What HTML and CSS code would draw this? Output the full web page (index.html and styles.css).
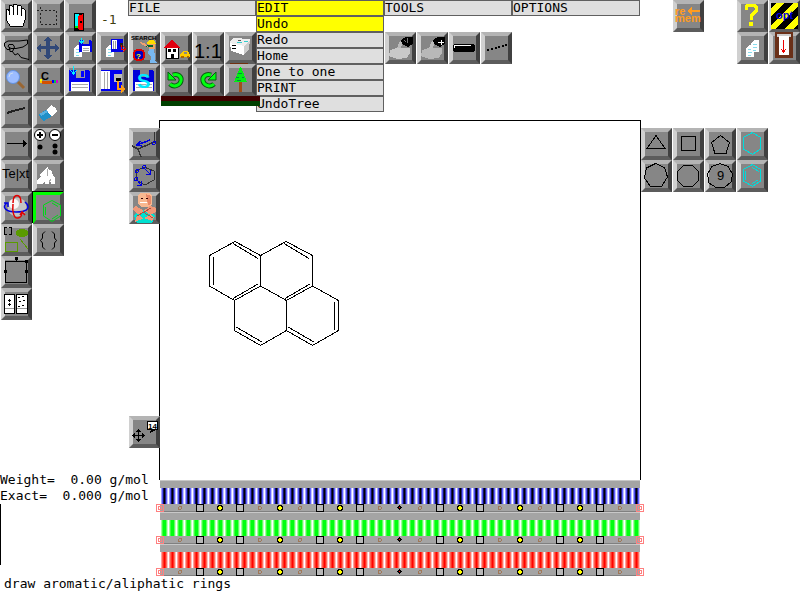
FILE: index.html
```
<!DOCTYPE html>
<html lang="en">
<head>
<meta charset="utf-8">
<title>Chemical drawing editor</title>
<link rel="stylesheet" href="styles.css">
</head>
<body>
<svg class="defs" aria-hidden="true">
  <defs>
    <g id="end" fill="none" stroke="#ff8080"><rect x="-3.5" y="4.5" width="7" height="7"/><rect x="-1.5" y="6.5" width="3" height="3"/></g>
    <g id="ring" fill="none" stroke="#a07858"><circle cx="0" cy="8" r="1.5"/></g>
    <g id="box" fill="#b8b8b8" stroke="#000"><rect x="-3.5" y="4.5" width="7" height="7"/></g>
    <g id="dot" fill="#ff0" stroke="#000"><path d="M-1 5.500H1L2.500 7V9L1 10.500H-1L-2.500 9V7Z"/></g>
    <g id="mid"><path d="M-1 5H0V6H1V7H2V8H1V9H0V10H-1V9H-2V8H-3V7H-2V6H-1Z" fill="#000"/><rect x="-1" y="7" width="1" height="1" fill="#f00"/></g>
    <g id="marks">
      <use href="#end" x="0%"/><use href="#ring" x="4.167%"/><use href="#box" x="8.333%"/><use href="#dot" x="12.5%"/><use href="#box" x="16.667%"/><use href="#ring" x="20.833%"/><use href="#dot" x="25%"/><use href="#ring" x="29.167%"/><use href="#box" x="33.333%"/><use href="#dot" x="37.5%"/><use href="#box" x="41.667%"/><use href="#ring" x="45.833%"/><use href="#mid" x="50%"/><use href="#ring" x="54.167%"/><use href="#box" x="58.333%"/><use href="#dot" x="62.5%"/><use href="#box" x="66.667%"/><use href="#ring" x="70.833%"/><use href="#dot" x="75%"/><use href="#ring" x="79.167%"/><use href="#box" x="83.333%"/><use href="#dot" x="87.5%"/><use href="#box" x="91.667%"/><use href="#ring" x="95.833%"/><use href="#end" x="100%"/>
    </g>
    <g id="sheet"><path d="M3 0H8V12H0V3Z" fill="#fff"/><path d="M2 4.500H6M2 7.500H6M2 10.500H5" stroke="#8de" fill="none"/></g>
  </defs>
</svg>
<main class="app">
  <section class="palette" aria-label="Tools">
    <div class="tools two">
      <button class="tool" aria-label="Hand"><svg viewBox="1 0 31 32"><path d="M10 26 7 21 6 12V10L8 9 9 11V6L11 5 13 7V5L15 4 17 5V7L19 5 21 6V9L23 8 25 10V20L23 26Z" fill="#fff" stroke="#000"/><path d="M9.500 9V15M13.500 7V15M17.500 7V15M21.500 9V16" stroke="#000"/></svg></button>
      <button class="tool" aria-label="Select"><svg viewBox="1 0 31 32"><path d="M8.500 10.500H24.500V24.500H8.500ZM5 10.500H8M8.500 7V10" fill="none" stroke="#222" stroke-dasharray="2 2"/></svg></button>
      <button class="tool" aria-label="Lasso"><svg class="smooth" viewBox="1 0 31 32" fill="none" stroke="#000"><path d="M10 17.500H7L4.500 14V11L8 9H19L27.500 8V12L23 15 16 16.500H11L8 14.500 9 12.500H13L14.500 15 12.500 19.500H10L9.500 16ZM12 19 15 23 18 21.500 21 25.500 29 27.500"/></svg></button>
      <button class="tool" aria-label="Move"><svg viewBox="1 0 31 32"><path d="M16 4 20 9H18V14H23V12L28 16 23 20V17H18V23H20L16 28 12 23H14V17H9V20L4 16 9 12V14H14V9H12Z" fill="#304878"/></svg></button>
      <button class="tool" aria-label="Magnify"><svg class="smooth" viewBox="1 0 31 32"><path d="M18 18 24 24" stroke="#996633" stroke-width="3"/><circle cx="13" cy="13" r="6.500" fill="#9cbcff" stroke="#6090e0"/><path d="M9 13Q9 9 13 9" stroke="#cde" fill="none"/></svg></button>
      <button class="tool" aria-label="Colour"><svg viewBox="1 0 31 32"><text class="icon-letter" x="9" y="16">C</text><path d="M8 15H10V17H8Z" fill="#ff0"/><path d="M8 17H19V19H8Z" fill="#fc0"/><path d="M10 17H20V20H10Z" fill="#d45000"/><path d="M20 16H22V19H20Z" fill="#00f"/><path d="M22 16H24V19H22Z" fill="#0c4"/><path d="M24 16H26V19H24Z" fill="#d0c"/></svg></button>
      <button class="tool" aria-label="Line"><svg viewBox="1 0 31 32"><path d="M7 17 13 15 25 12" stroke="#202020" stroke-width="2" fill="none"/></svg></button>
      <button class="tool" aria-label="Erase"><svg viewBox="1 0 31 32"><path d="M7 18 16 13 20 20 12 25 8 22Z" fill="#2090c8"/><path d="M7 18 15 14 16 16 9 20Z" fill="#58b0e0"/><path d="M15 13 19 9 24 12 25 15 20 20 16 17Z" fill="#fff"/></svg></button>
      <button class="tool" aria-label="Arrow"><svg viewBox="1 0 31 32"><path d="M7 15.500H26" stroke="#000"/><path d="M23 12 27 15.500 23 19Z"/></svg></button>
      <button class="tool" aria-label="Charge"><svg class="smooth" viewBox="1 0 31 32"><circle cx="8" cy="7" r="5.500" fill="#fff" stroke="#000"/><circle cx="23" cy="7" r="5.500" fill="#fff" stroke="#000"/><path d="M5 7H11M8 4V10M20 7H26" stroke="#000" stroke-width="2"/><circle cx="8" cy="19" r="2.500"/><circle cx="23" cy="18" r="2.500"/><circle cx="23" cy="24" r="2.500"/></svg></button>
      <button class="tool" aria-label="Text"><svg viewBox="1 0 31 32"><text class="icon-text" x="2" y="18">Te|xt</text></svg></button>
      <button class="tool" aria-label="Brush"><svg viewBox="1 0 31 32"><path d="M5 24V20L9 17 8 14 10 12 14 8 16 7 17 10 20 11 21 16 23 18V24H19V22H17V24H13V22L10 24Z" fill="#fff"/><path d="M15.500 9V16M17 22 19 19" stroke="#aaa"/></svg></button>
      <button class="tool" aria-label="Rotate in space"><svg class="smooth" viewBox="1 0 31 32"><circle cx="17" cy="15" r="9.500" fill="#c4c4c4"/><circle cx="14" cy="12" r="5" fill="#f8f8f8"/><path d="M7 11C1 15 6 20 16 20S30 17 27 12L25 10M4 11H8V15" fill="none" stroke="#0000e0" stroke-width="1.500"/><path d="M13 11C13 1 21 1 21 11M13 12C12 20 14 27 18 26S21 24 22 21M20 23 22 20 25 23" fill="none" stroke="#e00000" stroke-width="1.500"/></svg></button>
      <button class="tool selected" aria-label="Rings" aria-pressed="true"><svg class="smooth" viewBox="1 0 31 32"><path d="M20 8.500 28.500 13V24L20 29.500 11.500 24V13ZM20 11 26 14.500M26 23 20 27M13.500 15V23" fill="none" stroke="#00d818"/></svg></button>
      <button class="tool" aria-label="Shapes"><svg viewBox="1 0 31 32" fill="none"><path d="M7 3.500H4.500V10.500H7M9 3.500H11.500V10.500H9" stroke="#000"/><ellipse cx="22" cy="9" rx="6" ry="4" fill="#5a9b00"/><path d="M5.500 18.500H17.500V27.500H5.500ZM20 15 28 25" stroke="#5a9b00"/></svg></button>
      <button class="tool" aria-label="Braces"><svg class="smooth" viewBox="1 0 31 32"><path d="M13 7.500 10.500 10V14L8.500 16.500 10.500 19V23L13 25.500M20 7.500 22.500 10V14L24.500 16.500 22.500 19V23L20 25.500" fill="none" stroke="#000"/></svg></button>
      <button class="tool first" aria-label="Resize"><svg viewBox="1 0 31 32"><path d="M5.500 5.500H26.500V26.500H5.500ZM16.500 2V5" fill="none" stroke="#000"/><path d="M15 1H18V4H15ZM4 14H7V17H4ZM25 14H28V17H25ZM25 4H28V7H25Z"/></svg></button>
      <button class="tool first" aria-label="Templates"><svg viewBox="1 0 31 32"><path d="M4.500 6.500H14.500V25.500H4.500ZM16.500 6.500H27.500V25.500H16.500Z" fill="#fff" stroke="#000"/><path d="M8 12.500H11M9.500 11V14M8 16.500H11M9.500 15V18M18 9.500H20M22 8.500H24M19 13.500H21M23 12.500H25M18 18.500H20M22 17.500H24" stroke="#000"/><path d="M5 20.500H14M17 20.500H27" stroke="#999"/></svg></button>
    </div>
    <div class="tools two">
      <button class="tool" aria-label="Exit"><svg viewBox="1 0 31 32"><path d="M10 13H20V31H10Z"/><path d="M11 14H15V27H11Z" fill="#00f8ff"/><path d="M11 26H15V28H11Z" fill="#0e0"/><path d="M14 16 19 14V30H15L14 28Z" fill="#f00"/><path d="M16 21H18V23H16Z"/></svg></button>
      <output class="level">-1</output>
      <button class="tool" aria-label="Save page"><svg viewBox="1 0 31 32"><use href="#sheet" x="10" y="13"/><path d="M15 8H27L28 10V20H15Z" fill="#0000e8"/><path d="M19 8H25V12H19Z" fill="#888"/><path d="M18 14H26V20H18Z" fill="#fff"/><path d="M19 16.500H25M19 18.500H25" stroke="#aaa"/><path d="M17.500 6V11M15 8.500 17.500 11 20 8.500" stroke="#0ef" fill="none"/></svg></button>
      <button class="tool" aria-label="Load page"><svg viewBox="1 0 31 32"><use href="#sheet" x="10" y="13"/><path d="M15 7H27V20H15Z" fill="#0000e8"/><path d="M16 8H21V17H16Z" fill="#fff"/><path d="M17.500 9V17M19.500 9V17" stroke="#999"/><path d="M24 11H27V15H24Z" fill="#222"/><path d="M25.500 13V17H29M27 14 30 17 27 20" stroke="#e00" fill="none"/></svg></button>
      <button class="tool" aria-label="Save"><svg viewBox="1 0 31 32"><path d="M5 6H24L26 8V27H5Z" fill="#0000f0"/><path d="M12 6H21V14H12Z" fill="#999"/><path d="M17 7H20V13H17Z" fill="#00f"/><path d="M7 18H25V27H7Z" fill="#fff"/><path d="M8 20.500H24M8 23.500H24" stroke="#aaa"/><path d="M9.500 2V9M6 6 9.500 10 13 6" stroke="#0ef" fill="none"/></svg></button>
      <button class="tool" aria-label="Load"><svg viewBox="1 0 31 32"><path d="M5 6H26V27H5Z" fill="#0000f0"/><path d="M5 7H14V25H5Z" fill="#fff"/><path d="M8.500 8V25M11.500 8V25" stroke="#aaa"/><path d="M18 10H26V18H18Z" fill="#bbb"/><path d="M20 14H25V17H20Z" fill="#000"/><path d="M22 17V25H26" fill="none" stroke="#ff9c10" stroke-width="2"/><path d="M25 21 30 25 25 29Z" fill="#ff9c10"/></svg></button>
    </div>
  </section>

  <header class="header">
    <div class="header-main">
      <nav class="menubar">
        <button class="menu">FILE</button>
        <div class="menu-group">
          <button class="menu active" aria-expanded="true">EDIT</button>
          <div class="dropdown">
            <button class="menu active">Undo</button>
            <button class="menu">Redo</button>
            <button class="menu">Home</button>
            <button class="menu">One to one</button>
            <button class="menu">PRINT</button>
            <button class="menu">UndoTree</button>
          </div>
        </div>
        <button class="menu">TOOLS</button>
        <button class="menu">OPTIONS</button>
      </nav>
      <div class="strips">
        <div class="tools four">
          <button class="tool" aria-label="Search"><svg viewBox="1 0 31 32"><text class="icon-tiny" x="3" y="8">SEARCH</text><path d="M19 11 21 8H26L28 12H19Z" fill="#fd0"/><path d="M20 12H27V17H21Z" fill="#f0a060"/><path d="M18 13H25V15H18Z" fill="#063"/><path d="M12 10 18 12 20 15 13 12Z" fill="#f0a070"/><path d="M21 17H26L27 25V29L30 31H22L23 25 20 22Z" fill="#78b8f0"/><circle cx="11" cy="23" r="5.500" fill="#0000c0" stroke="#e00000" stroke-width="2"/><text class="icon-badge" x="8" y="27" fill="#ff0">?</text></svg></button>
          <button class="tool" aria-label="Home"><svg viewBox="1 0 31 32"><path d="M6 14H18V26H6Z" fill="#fff" stroke="#000"/><path d="M12 7 20 16H4Z" fill="#e00010"/><path d="M8 17H11V20H8ZM13 17H16V20H13ZM11 22H14V26H11Z"/><path d="M20 22 23 19H28L30 23V25H20Z" fill="#fc0"/><path d="M24 20H27V22H24Z" fill="#888"/><path d="M21 24H24V26H21ZM27 24H29V26H27Z" fill="#a60"/></svg></button>
          <button class="tool" aria-label="One to one"><svg viewBox="1 0 31 32"><text class="icon-ratio" x="2" y="26">1:1</text></svg></button>
          <button class="tool" aria-label="Print"><svg viewBox="1 0 31 32"><path d="M6 10 9 6 26 7 25 11 21 17 20 23 7 18Z" fill="#eee"/><path d="M6 11 20 14V23L7 19Z" fill="#fff"/><path d="M8 13.500H12M8 16.500H12" stroke="#000"/><path d="M20 14 26 8 25 17 20 23Z" fill="#ccc"/><path d="M13 10.500H18M20 9.500H24" stroke="#3cc"/><path d="M14 8.500H17" stroke="#555"/><path d="M6 31.500H24" stroke="#703010"/></svg></button>
          <button class="tool" aria-label="Quick save"><svg viewBox="1 0 31 32"><path d="M5 6H24L26 8V27H5Z" fill="#0000d8"/><path d="M12 6H21V13H12Z" fill="#888"/><path d="M7 18H25V27H7Z" fill="#fff"/><path d="M8 20.500H24M8 23.500H24" stroke="#aaa"/><text class="icon-big" x="9" y="24" fill="#00eaff">S</text></svg></button>
          <button class="tool" aria-label="Undo"><svg class="smooth" viewBox="1 0 31 32"><path d="M13 11C18 9 22 13 21 17S14 24 10 20" fill="none" stroke="#055c10" stroke-width="5"/><path d="M8 8V16H16Z" fill="#00ff10" stroke="#055c10"/><path d="M13 11C18 9 22 13 21 17S14 24 10 20" fill="none" stroke="#00ff10" stroke-width="3"/></svg></button>
          <button class="tool" aria-label="Redo"><svg class="smooth" viewBox="1 0 31 32"><path d="M19 11C14 9 10 13 11 17S18 24 22 20" fill="none" stroke="#055c10" stroke-width="5"/><path d="M24 8V16H16Z" fill="#00ff10" stroke="#055c10"/><path d="M19 11C14 9 10 13 11 17S18 24 22 20" fill="none" stroke="#00ff10" stroke-width="3"/></svg></button>
          <button class="tool" aria-label="Undo tree"><svg viewBox="1 0 31 32"><path d="M15 16H18V28H15Z" fill="#a05018"/><path d="M16 3H17L23 18H10Z" fill="#00f010"/><path d="M14 9.500H18M12 13.500H15M18 13.500H20M13 16.500H17" stroke="#084"/></svg></button>
          <div class="history"></div>
        </div>
        <div class="tools four">
          <button class="tool" aria-label="Spray"><svg viewBox="1 0 31 32"><path d="M13 16 16 9 19 10 16 18Z" fill="#bbb"/><path d="M6 18 12 16H26V21L23 26 13 27 5 24Z" fill="#c8c8c8"/><path d="M17 8 22 5H29V12L24 15 18 12Z" fill="#000"/><path d="M20 8 22 10M24 6 23 11" stroke="#777"/></svg></button>
          <button class="tool" aria-label="Spray add"><svg viewBox="1 0 31 32"><path d="M13 16 16 9 19 10 16 18Z" fill="#bbb"/><path d="M6 18 12 16H26V21L23 26 13 27 5 24Z" fill="#b8b8b8"/><path d="M17 8 22 5H29V12L24 15 18 12Z" fill="#000"/><path d="M22 10.500H28M25 8V13" stroke="#fff"/></svg></button>
          <button class="tool" aria-label="Thick bond"><svg viewBox="1 0 31 32"><rect x="5" y="12" width="22" height="8" rx="3"/><path d="M6.500 16V14L8 13.500H23" fill="none" stroke="#fff"/></svg></button>
          <button class="tool" aria-label="Dotted bond"><svg viewBox="1 0 31 32"><path d="M7 17H9V19H7ZM11 16H13V18H11ZM15 15H17V17H15ZM18 14H20V16H18ZM22 13H24V15H22ZM25 12H27V14H25Z"/></svg></button>
        </div>
      </div>
    </div>
    <button class="tool" aria-label="Remember"><svg viewBox="1 0 31 32" fill="#ff9c20"><text class="icon-word" x="3" y="15">re</text><text class="icon-word" x="3" y="22">mem</text><path d="M15 11 20 7V10H28V12H20V15Z"/></svg></button>
    <div class="tools two corner">
      <button class="tool" aria-label="Help"><svg viewBox="1 0 31 32"><path d="M10 10V7L12 5H18L20 7V11L15 16V20" fill="none" stroke="#ff0" stroke-width="3"/><path d="M13 22H17V26H13Z" fill="#ff0"/></svg></button>
      <button class="tool" aria-label="Options"><svg viewBox="1 0 31 32"><path d="M3 3H30V29H3Z" fill="#000"/><path d="M3 8 8 3H16L3 16ZM3 25 25 3H30V6L7 29H3ZM16 29 30 15V24L25 29Z" fill="#ff0"/><text class="icon-opt" x="8" y="19" fill="#0000d8">opt</text></svg></button>
      <button class="tool" aria-label="Copy"><svg viewBox="1 0 31 32"><use href="#sheet" x="10" y="13"/><use href="#sheet" x="15" y="8"/></svg></button>
      <button class="tool" aria-label="Scroll"><svg viewBox="1 0 31 32"><path d="M7 0H25V26H7Z" fill="#6a3018"/><path d="M9 2H23V5H9Z" fill="#ccc"/><path d="M11 4H21V23H11Z" fill="#fff"/><path d="M15.500 8V20M13 17 15.500 20 18 17" fill="none" stroke="#e00"/></svg></button>
    </div>
  </header>

  <aside class="side">
    <button class="tool" aria-label="Bond angle"><svg viewBox="1 0 31 32" fill="none"><path d="M26.500 4V14L10 21 4 18M10 21 13 29" stroke="#333" stroke-width="1.500"/><path d="M22 12 9 17M12 13 9 17 14 18" stroke="#0000e0" stroke-width="1.500"/><circle cx="26" cy="15" r="1.500" stroke="#00d"/></svg></button>
    <button class="tool" aria-label="Bond ring"><svg viewBox="1 0 31 32" fill="none"><path d="M16 7 26 11V20L17 25 8 20V11Z" stroke="#333"/><g stroke="#0000e0"><circle cx="16" cy="7" r="1.500"/><circle cx="9" cy="11" r="1.500"/><circle cx="8" cy="19" r="1.500"/><path d="M16 8 22 14M22 10V14H18M9 20 13 25M13 21V25H9"/></g></svg></button>
    <button class="tool" aria-label="Clean"><svg viewBox="1 0 31 32"><path d="M6 24 10 18H23L27 24 24 31H9Z" fill="#00e0d0"/><path d="M10 3 13 1H21L24 4V12L21 15H13L10 11Z" fill="#f8b890"/><path d="M18 2 23 4V12L20 13Z" fill="#e88868"/><path d="M13 6.500H15M18 6.500H20" stroke="#300"/><path d="M12 10.500H19" stroke="#fff"/><path d="M4 17 8 14 26 25 24 29 15 26ZM28 16 22 14 9 24 7 30 14 27 28 20Z" fill="#f09878"/><path d="M9 24 23 16M15 20 25 26" stroke="#b05040"/></svg></button>
    <button class="tool last" aria-label="Move label"><svg viewBox="1 0 31 32"><path d="M5 19.500H16M10.500 14V25" stroke="#000"/><path d="M8 16 10.500 13 13 16ZM8 23 10.500 26 13 23ZM7 17 4 19.500 7 22ZM14 17 17 19.500 14 22Z"/><path d="M19.500 5.500H29.500V13.500H19.500Z" fill="#fff" stroke="#000"/><text class="icon-badge" x="20" y="13">14</text><path d="M23 14H28L22 17Z"/></svg></button>
  </aside>

  <section class="canvas" aria-label="Drawing">
    <svg viewBox="160 121 480 359" preserveAspectRatio="xMinYMin meet"><path d="M235 241.500 260.500 255.500V286L234.500 300.500 209.500 286V255.500ZM260.500 255.500 286 241.500 312.500 255.500V286L286.500 300.500 260.500 286M234.500 300.500V330.500L260.500 345.500 286.500 330.500V300.500M312.500 286 338.500 300.500V330.500L312.500 345.500 286.500 330.500M233 243.500 258 258.500M213.500 257V285M258 284 233 298.500M284 243.500 309 258.500M310 284 285 298.500M334.500 302V330M236 327 262 342M288 327 314 342" fill="none" stroke="#000" shape-rendering="crispEdges"/></svg>
  </section>

  <aside class="rings">
    <div class="tools four">
      <button class="tool" aria-label="Triangle"><svg viewBox="1 0 31 32"><path d="M16 7.500 25 20.500H7Z"/></svg></button>
      <button class="tool" aria-label="Square"><svg viewBox="1 0 31 32"><path d="M9.500 8.500H23.500V22.500H9.500Z"/></svg></button>
      <button class="tool" aria-label="Pentagon"><svg viewBox="1 0 31 32"><path d="M16.500 7.500 25.500 14.500 22 25.500H11L7.500 14.500Z"/></svg></button>
      <button class="tool cyan" aria-label="Hexagon"><svg viewBox="1 0 31 32"><path d="M16.500 4.500 24.500 9.500V21L16.500 26.500 7.500 21V9.500Z"/></svg></button>
      <button class="tool" aria-label="Heptagon"><svg viewBox="1 0 31 32"><path d="M15.500 3.500 24.500 7.500 27.500 17 21.500 26.500H10.500L4.500 18 6.500 8Z"/></svg></button>
      <button class="tool" aria-label="Octagon"><svg viewBox="1 0 31 32"><path d="M11.500 5.500H20.500L26.500 11.500V20.500L20.500 26.500H11.500L5.500 20.500V11.500Z"/></svg></button>
      <button class="tool" aria-label="Nine-membered ring"><svg viewBox="1 0 31 32"><path d="M16 3.500 24 6.500 28.500 14 27 22 20.500 27.500H12L5 23 3.500 14 8 6.500Z"/><text class="icon-text" x="13" y="20">9</text></svg></button>
      <button class="tool cyan" aria-label="Benzene"><svg viewBox="1 0 31 32"><path d="M16.500 4.500 24.500 9.500V21L16.500 26.500 7.500 21V9.500ZM16.500 7.500 23 11.500M22.500 19.500 16.500 23.500M9.500 11V20"/></svg></button>
    </div>
  </aside>

  <section class="readout">
    <p>Weight=&nbsp; 0.00 g/mol</p>
    <p>Exact=&nbsp; 0.000 g/mol</p>
    <div class="caret"></div>
  </section>

  <section class="sliders" aria-label="Colour levels">
    <div class="band"><div class="stripes blue"></div><svg class="marks"><use href="#marks"/></svg></div>
    <div class="band"><div class="stripes green"></div><svg class="marks"><use href="#marks"/></svg></div>
    <div class="band"><div class="stripes red"></div><svg class="marks"><use href="#marks"/></svg></div>
  </section>

  <footer class="hint">draw aromatic/aliphatic rings</footer>
</main>
</body>
</html>
```
FILE: styles.css
```
* { box-sizing: border-box; }

body {
  margin: 0;
  background: #fff;
  color: #000;
  font: 13px/16px "DejaVu Sans Mono", "Liberation Mono", monospace;
}

button { font: inherit; color: inherit; }

.defs { position: absolute; width: 0; height: 0; }

.app {
  display: grid;
  grid-template-columns: 128px 32px minmax(0, 1fr) 160px;
  grid-template-rows: 120px minmax(360px, 1fr) 96px 24px;
  min-height: 100vh;
}

.palette {
  grid-column: 1;
  grid-row: 1 / 3;
  display: flex;
  align-items: flex-start;
}

.tools {
  display: grid;
  column-gap: 1px;
  padding-left: 1px;
}
.two { grid-template-columns: repeat(2, 31px); }
.four { grid-template-columns: repeat(4, 31px); }

.tool {
  display: block;
  flex: none;
  width: 31px;
  height: 32px;
  padding: 0;
  border: 4px solid;
  border-color: #b4b4b4 #404040 #5c5c5c #d0d0d0;
  background: #868686;
}
.tool svg {
  display: block;
  width: 31px;
  height: 32px;
  margin: -4px;
  shape-rendering: crispEdges;
}
.tool .smooth { shape-rendering: auto; }
.tool.first { grid-column: 1; }
.tool.selected {
  border-width: 3px 4px 4px 3px;
  border-color: #00ff00 #505050 #5c5c5c #00ff00;
  box-shadow: -1px -1px #000;
}
.tool.selected svg { margin: -3px -4px -4px -3px; }

.icon-text { font: 13px "Liberation Sans", sans-serif; }
.icon-ratio { font: 20px "Liberation Sans", sans-serif; }
.icon-letter { font: bold 11px "Liberation Sans", sans-serif; }
.icon-word { font: bold 11px "Liberation Sans", sans-serif; }
.icon-opt { font: bold 11px "Liberation Sans", sans-serif; }
.icon-tiny { font: bold 6px "Liberation Sans", sans-serif; }
.icon-badge { font: bold 8px "Liberation Sans", sans-serif; }
.icon-big { font: bold 20px "Liberation Sans", sans-serif; }

.level {
  padding: 12px 0 0 4px;
  color: #404010;
}

.header {
  grid-column: 2 / 5;
  grid-row: 1;
  display: flex;
  align-items: flex-start;
}
/* The first 128px belong to the palette, so the bar starts right after it. */
.header-main { flex: 1; }
.corner { margin-left: 32px; }

.menubar {
  display: flex;
  width: 512px;
  height: 16px;
}
.menu {
  display: block;
  width: 128px;
  height: 16px;
  padding: 0;
  border: 1px solid #606060;
  background: #dfdfdf;
  line-height: 14px;
  text-align: left;
}
.menu.active { background: #ffff00; }
.menu-group { position: relative; width: 128px; }
.dropdown {
  position: absolute;
  top: 16px;
  left: 0;
  z-index: 2;
}

.strips {
  display: flex;
  gap: 128px;
  align-items: flex-start;
  padding-top: 16px;
}
.history {
  position: relative;
  z-index: 3;
  grid-column: 2 / 5;
  width: 99px;
  height: 10px;
  background: linear-gradient(#400000 50%, #004000 50%);
}

.side {
  position: relative;
  z-index: 1;
  grid-column: 2;
  grid-row: 2;
  display: flex;
  flex-direction: column;
  padding: 8px 0 32px 1px;
}
.last { margin-top: auto; }

.canvas {
  grid-column: 3;
  grid-row: 2;
  margin: 0 -1px;
  border: 1px solid #000;
  border-bottom: 0;
}
.canvas svg { display: block; width: 100%; }

.rings {
  grid-column: 4;
  grid-row: 2;
  padding-top: 8px;
}
.rings path { fill: none; stroke: #000; }
.rings .cyan path { stroke: #00dcdc; }

.readout {
  grid-column: 1 / 3;
  grid-row: 2 / 4;
  align-self: end;
  padding-bottom: 11px;
  white-space: nowrap;
}
.readout p { margin: 0; }
.caret {
  width: 1px;
  height: 61px;
  background: #000;
}

.sliders {
  grid-column: 3;
  grid-row: 3;
}
.band {
  height: 32px;
  padding-top: 7px;
  border-top: 1px solid #c8c8c8;
  border-bottom: 1px solid #808080;
  background: #a4a4a4;
}
.stripes { height: 16px; }
.blue { background: repeating-linear-gradient(90deg, #fff 0 1px, #a0a0ff 1px 2px, #5050f0 2px 3px, #101060 3px 4px, #000000 4px 5px, #202080 5px 6px, #6060ff 6px 7px, #c0c0ff 7px 8px); }
.green { background: repeating-linear-gradient(90deg, #fff 0 1px, #a0ffa0 1px 2px, #40ff40 2px 3px, #00ff10 3px 6px, #60ff60 6px 7px, #c0ffc0 7px 8px); }
.red { background: repeating-linear-gradient(90deg, #fff 0 1px, #ffa0a0 1px 2px, #ff6050 2px 3px, #ff3020 3px 4px, #ff0000 4px 5px, #ff3020 5px 6px, #ff7060 6px 7px, #ffc0c0 7px 8px); }
.marks {
  display: block;
  width: 100%;
  height: 16px;
  margin-top: -4px;
  overflow: visible;
  shape-rendering: crispEdges;
}

.hint {
  grid-column: 1 / 5;
  grid-row: 4;
  padding-left: 4px;
}
```
